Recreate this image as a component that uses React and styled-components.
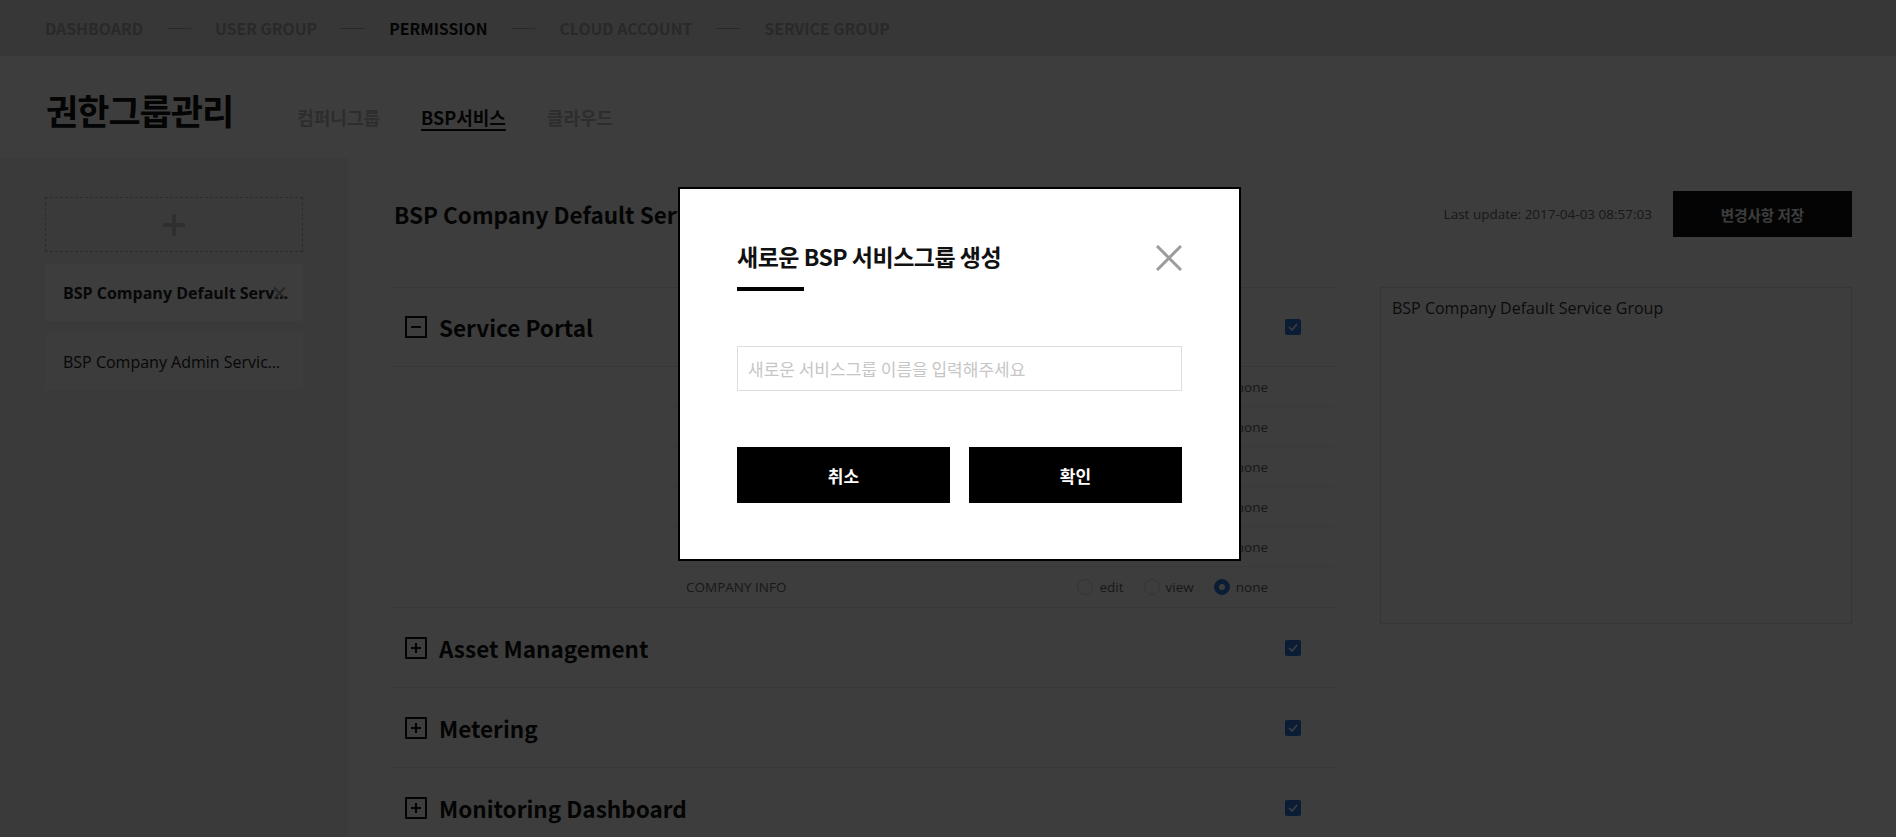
import React from 'react';
import styled, { createGlobalStyle } from 'styled-components';

const GlobalStyle = createGlobalStyle`
    html, body {
        margin: 0;
        padding: 0;
        height: 100%;
        overflow: hidden;
    }
    body {
        font-family: "Noto Sans CJK KR", "Noto Sans", sans-serif;
        background: #fff;
        color: #111;
    }
    * {
        box-sizing: border-box;
    }
`;

const Page = styled.div`
    min-height: 100vh;
    display: flex;
    flex-direction: column;
`;

// top breadcrumb style nav
const TopNav = styled.nav`
    height: 56px;
    flex-shrink: 0;
    display: flex;
    align-items: center;
    gap: 24px;
    padding-left: 45px;
    background: #e4e4e4;
`;

const NavItem = styled.span`
    font-size: 15.8px;
    font-weight: 700;
    color: ${props => (props.$active ? '#111' : '#ababab')};
`;

const NavDash = styled.span`
    width: 24px;
    height: 1px;
    background: #ababab;
`;

const Header = styled.header`
    height: 102px;
    flex-shrink: 0;
    display: flex;
    align-items: baseline;
    padding: 29px 46px 0;
    background: #fff;
`;

const PageHeading = styled.h1`
    margin: 0 64px 0 0;
    font-size: 35px;
    line-height: 50px;
    font-weight: 700;
    letter-spacing: -1px;
    color: #111;
`;

const SubTab = styled.span`
    margin-right: 41px;
    font-size: 18px;
    font-weight: 700;
    color: ${props => (props.$active ? '#111' : '#bdbdbd')};
    text-decoration: ${props => (props.$active ? 'underline' : 'none')};
    text-decoration-thickness: 2px;
    text-underline-offset: 4px;
`;

const Content = styled.div`
    flex: 1;
    display: flex;
`;

const Sidebar = styled.aside`
    width: 348px;
    flex-shrink: 0;
    display: flex;
    flex-direction: column;
    gap: 12px;
    padding: 39px 45px;
    background: #f2f2f2;
`;

const AddBox = styled.button`
    height: 55px;
    display: flex;
    align-items: center;
    justify-content: center;
    border: 1px dashed #b3b3b3;
    background: transparent;
    padding: 0;
`;

const GroupItem = styled.div`
    position: relative;
    height: 57px;
    display: flex;
    align-items: center;
    padding: 0 14px 0 18px;
    background: ${props => (props.$active ? '#fff' : '#f9f9f9')};
    font-family: "Open Sans", "Noto Sans CJK KR", sans-serif;
    font-size: 16px;
    font-weight: ${props => (props.$active ? 700 : 400)};
    color: #222;
`;

const ItemText = styled.span`
    overflow: hidden;
    white-space: nowrap;
    text-overflow: ellipsis;
`;

const RemoveIcon = styled.span`
    position: absolute;
    right: 17px;
    top: 50%;
    transform: translateY(-50%);
    display: flex;
`;

const Main = styled.main`
    flex: 1;
    padding: 33px 44px 0 46px;
    background: #fff;
`;

const TopRow = styled.div`
    height: 46px;
    display: flex;
    align-items: center;
`;

const GroupTitle = styled.h2`
    flex: 1;
    margin: 0;
    font-size: 22.5px;
    font-weight: 700;
    white-space: nowrap;
    color: #111;
`;

const LastUpdate = styled.span`
    margin-right: 21px;
    font-family: "Open Sans", sans-serif;
    font-size: 13.5px;
    color: #666;
`;

const SaveButton = styled.button`
    width: 179px;
    height: 46px;
    border: none;
    background: #111;
    color: #fff;
    font-family: "Noto Sans CJK KR", sans-serif;
    font-size: 14.5px;
    font-weight: 700;
`;

const Body = styled.div`
    margin-top: 50px;
    display: grid;
    grid-template-columns: 940px 472px;
    gap: 46px;
    align-items: start;
`;

const PermissionList = styled.div`
    border-top: 1px solid #e6e6e6;
`;

const Section = styled.section`
    border-bottom: 1px solid #e6e6e6;
`;

const SectionHead = styled.div`
    height: 79px;
    display: flex;
    align-items: center;
    gap: 12px;
    padding: 0 33px 0 11px;
    border-bottom: ${props => (props.$open ? '1px solid #e6e6e6' : 'none')};
`;

const SectionName = styled.span`
    flex: 1;
    font-size: 22.5px;
    font-weight: 700;
    color: #111;
`;

const Checkbox = styled.span`
    width: 16px;
    height: 16px;
    border-radius: 2px;
    background: #2a78d8;
    display: flex;
    align-items: center;
    justify-content: center;
`;

const SubList = styled.div`
    margin-left: 278px;
`;

const SubRow = styled.div`
    height: 40px;
    display: flex;
    align-items: center;
    justify-content: space-between;
    padding: 0 66px 0 14px;
    border-bottom: 1px solid #ececec;
    font-family: "Open Sans", sans-serif;
    font-size: 13.5px;
    color: #666;

    &:last-child {
        border-bottom: none;
    }
`;

const RadioGroup = styled.div`
    display: flex;
    gap: 20px;
`;

const RadioOption = styled.label`
    display: flex;
    align-items: center;
    gap: 6px;
`;

const RadioDot = styled.span`
    width: 16px;
    height: 16px;
    border-radius: 50%;
    border: 1px solid ${props => (props.$checked ? '#2a78d8' : '#d4d4d4')};
    background: ${props => (props.$checked ? '#2a78d8' : '#fff')};
    display: flex;
    align-items: center;
    justify-content: center;

    &::after {
        content: '';
        width: 6px;
        height: 6px;
        border-radius: 50%;
        background: ${props => (props.$checked ? '#fff' : 'transparent')};
    }
`;

const DescBox = styled.div`
    height: 337px;
    padding: 9px 11px;
    border: 1px solid #e2e2e2;
    font-family: "Open Sans", sans-serif;
    font-size: 16px;
    color: #333;
`;

// modal
const Overlay = styled.div`
    position: fixed;
    inset: 0;
    background: rgba(0, 0, 0, 0.76);
    padding: 187px 0 0 678px;
`;

const ModalBox = styled.div`
    width: 563px;
    background: #fff;
    border: 2px solid #000;
    padding: 48px 57px 56px;
`;

const ModalHead = styled.div`
    height: 38px;
    display: flex;
    align-items: center;
    justify-content: space-between;
`;

const ModalTitle = styled.h3`
    margin: 0;
    font-size: 23px;
    font-weight: 700;
    letter-spacing: -0.5px;
    color: #111;
`;

const CloseButton = styled.button`
    width: 26px;
    height: 26px;
    padding: 0;
    border: none;
    background: none;
    display: flex;
    margin-top: 4px;
`;

const TitleBar = styled.div`
    width: 67px;
    height: 4px;
    margin-top: 12px;
    background: #000;
`;

const NameInput = styled.input`
    display: block;
    width: 100%;
    height: 45px;
    margin-top: 55px;
    padding: 0 10px;
    border: 1px solid #dedede;
    font-family: "Noto Sans CJK KR", sans-serif;
    font-size: 17px;
    outline: none;

    &::placeholder {
        color: #c6c6c6;
    }
`;

const ButtonRow = styled.div`
    margin-top: 56px;
    display: grid;
    grid-template-columns: 1fr 1fr;
    gap: 19px;
`;

const ModalButton = styled.button`
    height: 56px;
    border: none;
    background: #000;
    color: #fff;
    font-family: "Noto Sans CJK KR", sans-serif;
    font-size: 17px;
    font-weight: 700;
`;

const PlusIcon = () => (
    <svg width="22" height="22" viewBox="0 0 22 22">
        <rect x="9" y="0" width="4" height="22" fill="#c4c4c4" />
        <rect x="0" y="9" width="22" height="4" fill="#c4c4c4" />
    </svg>
);

const SmallX = () => (
    <svg width="13" height="13" viewBox="0 0 13 13">
        <path d="M1 1L12 12M12 1L1 12" stroke="#9a9a9a" strokeWidth="2" />
    </svg>
);

const ToggleIcon = ({ open }) => (
    <svg width="22" height="22" viewBox="0 0 22 22">
        <rect x="1" y="1" width="20" height="20" fill="none" stroke="#111" strokeWidth="2" />
        <path d="M6 11H16" stroke="#111" strokeWidth="2" />
        {!open && <path d="M11 6V16" stroke="#111" strokeWidth="2" />}
    </svg>
);

const CheckMark = () => (
    <svg width="10" height="8" viewBox="0 0 10 8">
        <path d="M1 4L4 7L9 1" fill="none" stroke="#fff" strokeWidth="1.6" />
    </svg>
);

const navItems = ['DASHBOARD', 'USER GROUP', 'PERMISSION', 'CLOUD ACCOUNT', 'SERVICE GROUP'];

const subPermissions = ['DASHBOARD', 'NOTICE', 'QNA', 'USER MANAGEMENT', 'SERVICE INFO', 'COMPANY INFO'];

const sections = [
    { name: 'Service Portal', open: true },
    { name: 'Asset Management' },
    { name: 'Metering' },
    { name: 'Monitoring Dashboard' },
    { name: 'Billing' },
];

const App = () => {
    return (
        <Page>
            <GlobalStyle />
            <TopNav>
                {navItems.map((item, i) => (
                    <React.Fragment key={item}>
                        {i > 0 && <NavDash />}
                        <NavItem $active={item === 'PERMISSION'}>{item}</NavItem>
                    </React.Fragment>
                ))}
            </TopNav>

            <Header>
                <PageHeading>권한그룹관리</PageHeading>
                <SubTab>컴퍼니그룹</SubTab>
                <SubTab $active>BSP서비스</SubTab>
                <SubTab>클라우드</SubTab>
            </Header>

            <Content>
                <Sidebar>
                    <AddBox>
                        <PlusIcon />
                    </AddBox>
                    <GroupItem $active>
                        <ItemText>BSP Company Default Service Group</ItemText>
                        <RemoveIcon>
                            <SmallX />
                        </RemoveIcon>
                    </GroupItem>
                    <GroupItem>
                        <ItemText>BSP Company Admin Service Group</ItemText>
                    </GroupItem>
                </Sidebar>

                <Main>
                    <TopRow>
                        <GroupTitle>BSP Company Default Service Group</GroupTitle>
                        <LastUpdate>Last update: 2017-04-03 08:57:03</LastUpdate>
                        <SaveButton>변경사항 저장</SaveButton>
                    </TopRow>

                    <Body>
                        <PermissionList>
                            {sections.map(section => (
                                <Section key={section.name}>
                                    <SectionHead $open={section.open}>
                                        <ToggleIcon open={section.open} />
                                        <SectionName>{section.name}</SectionName>
                                        <Checkbox>
                                            <CheckMark />
                                        </Checkbox>
                                    </SectionHead>
                                    {section.open && (
                                        <SubList>
                                            {subPermissions.map(perm => (
                                                <SubRow key={perm}>
                                                    <span>{perm}</span>
                                                    <RadioGroup>
                                                        <RadioOption>
                                                            <RadioDot />
                                                            edit
                                                        </RadioOption>
                                                        <RadioOption>
                                                            <RadioDot />
                                                            view
                                                        </RadioOption>
                                                        <RadioOption>
                                                            <RadioDot $checked />
                                                            none
                                                        </RadioOption>
                                                    </RadioGroup>
                                                </SubRow>
                                            ))}
                                        </SubList>
                                    )}
                                </Section>
                            ))}
                        </PermissionList>
                        <DescBox>BSP Company Default Service Group</DescBox>
                    </Body>
                </Main>
            </Content>

            <Overlay>
                <ModalBox>
                    <ModalHead>
                        <ModalTitle>새로운 BSP 서비스그룹 생성</ModalTitle>
                        <CloseButton>
                            <svg width="26" height="26" viewBox="0 0 26 26">
                                <path d="M1 1L25 25M25 1L1 25" stroke="#9c9c9c" strokeWidth="3" />
                            </svg>
                        </CloseButton>
                    </ModalHead>
                    <TitleBar />
                    <NameInput placeholder="새로운 서비스그룹 이름을 입력해주세요" />
                    <ButtonRow>
                        <ModalButton>취소</ModalButton>
                        <ModalButton>확인</ModalButton>
                    </ButtonRow>
                </ModalBox>
            </Overlay>
        </Page>
    );
};

export default App;
